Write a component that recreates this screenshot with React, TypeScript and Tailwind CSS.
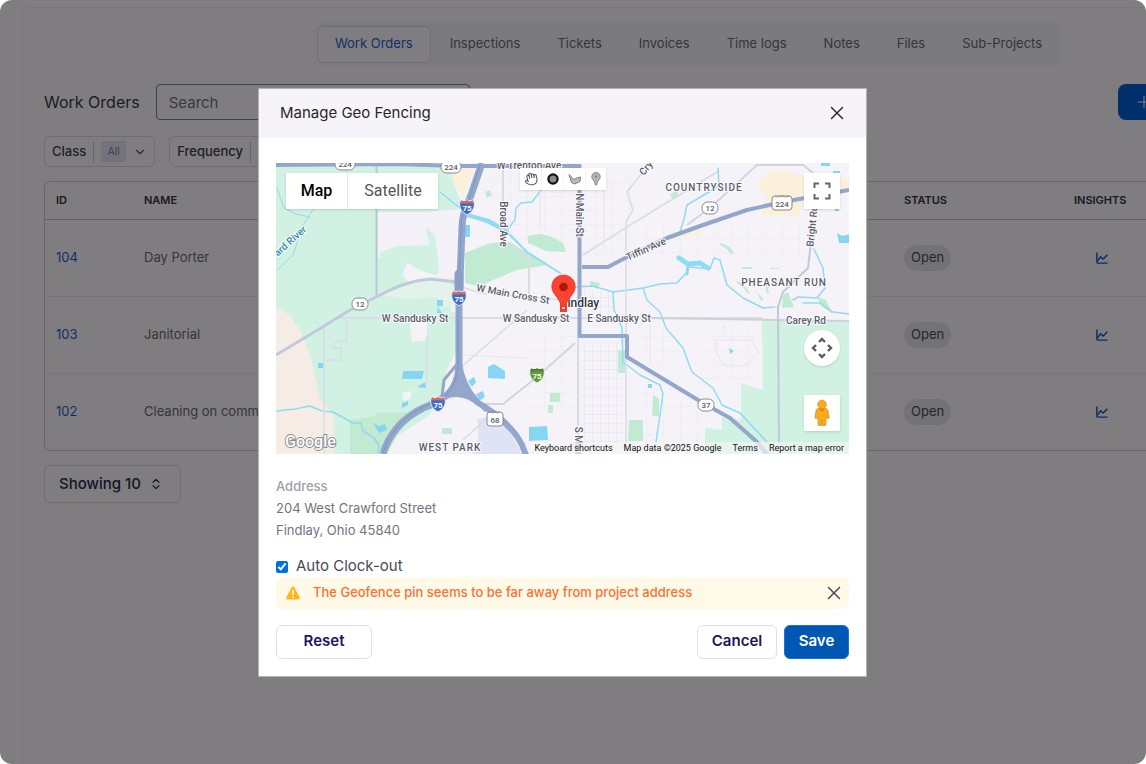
import { useState } from "react";
import { ChevronDown, ChevronsUpDown, Hand, Plus, X } from "lucide-react";

type Order = {
  id: number;
  name: string;
  status: string;
};

const TABS = [
  "Work Orders",
  "Inspections",
  "Tickets",
  "Invoices",
  "Time logs",
  "Notes",
  "Files",
  "Sub-Projects",
];

const FILTERS = ["Class", "Frequency"];

const ORDERS: Order[] = [
  { id: 104, name: "Day Porter", status: "Open" },
  { id: 103, name: "Janitorial", status: "Open" },
  { id: 102, name: "Cleaning on common areas", status: "Open" },
];

function TrendIcon() {
  return (
    <svg viewBox="0 0 12 12" className="size-3" fill="none" stroke="currentColor" strokeWidth="1.4">
      <path d="M.9.4V10a1.1 1.1 0 0 0 1.1 1.1h9.6" />
      <path d="M1.4 9.2 4.6 4.9l2.5 2.2 4.3-4.3" />
    </svg>
  );
}

function WarningIcon() {
  return (
    <svg viewBox="0 0 16 16" className="size-4 shrink-0">
      <path
        d="M6.7 2.2a1.5 1.5 0 0 1 2.6 0l5.4 10.1a1.4 1.4 0 0 1-1.3 2.1H2.6a1.4 1.4 0 0 1-1.3-2.1z"
        fill="#ffb81c"
      />
      <path d="M8 5.6v4" stroke="#fff8e6" strokeWidth="1.5" strokeLinecap="round" />
      <circle cx="8" cy="12" r=".9" fill="#fff8e6" />
    </svg>
  );
}

function Filter({ label }: { label: string }) {
  const id = `filter-${label.toLowerCase()}`;
  return (
    <div className="flex h-[31px] items-center rounded-md border border-[#dcdae4] px-[7px]">
      <label htmlFor={id} className="text-[13px] font-medium text-[#40404c]">
        {label}
      </label>
      <span className="mx-[7px] h-5 w-px bg-[#ccccd6]" />
      <select
        id={id}
        className="h-[21px] w-[25px] appearance-none rounded-xs bg-[#e8e6f6] text-center text-[10px] text-[#7c7c90]"
      >
        <option>All</option>
      </select>
      <ChevronDown className="ml-[7px] size-3.5 text-[#50505c]" />
    </div>
  );
}

function OrdersTable() {
  return (
    <div className="overflow-hidden rounded-md border border-[#cfccd4]">
      <table className="w-full table-fixed text-left text-[13px]">
        <thead className="text-[11px] text-[#34343e]">
          <tr className="h-[37px] border-b border-[#c8c5cc]">
            <th className="w-[99px] pl-[11px] font-semibold">ID</th>
            <th className="font-semibold">NAME</th>
            <th className="w-[170px] font-semibold">STATUS</th>
            <th className="w-[258px] font-semibold">INSIGHTS</th>
          </tr>
        </thead>
        <tbody>
          {ORDERS.map((o) => (
            <tr key={o.id} className="h-[77px] border-b border-[#eeeaf0] last:border-0">
              <td className="pl-[11px]">
                <a href={`#${o.id}`} className="text-[#1e62d0]">
                  {o.id}
                </a>
              </td>
              <td className="text-[#6c6c76]">{o.name}</td>
              <td>
                <span className="inline-flex h-[26px] items-center rounded-full bg-[#e6e4ee] px-[7px] text-[#4c4c56]">
                  {o.status}
                </span>
              </td>
              <td className="pl-[22px]">
                <button aria-label={`Insights ${o.id}`} className="flex text-[#0a58c8]">
                  <TrendIcon />
                </button>
              </td>
            </tr>
          ))}
        </tbody>
      </table>
    </div>
  );
}

function Label({
  x,
  y,
  size = 10,
  rotate = 0,
  weight = 500,
  fill = "#5a5e66",
  spacing,
  children,
}: {
  x: number;
  y: number;
  size?: number;
  rotate?: number;
  weight?: number;
  fill?: string;
  spacing?: number;
  children: string;
}) {
  return (
    <text
      x={x}
      y={y}
      fontSize={size}
      fontWeight={weight}
      fill={fill}
      stroke="#fbfaff"
      strokeWidth="2"
      paintOrder="stroke"
      textAnchor="middle"
      dominantBaseline="central"
      letterSpacing={spacing}
      transform={`rotate(${rotate} ${x} ${y})`}
    >
      {children}
    </text>
  );
}

function Shield({ x, y, us = false, children }: { x: number; y: number; us?: boolean; children: string }) {
  const w = children.length * 4 + 8;
  const h = us ? 14 : 12;
  return (
    <g>
      <rect x={x - w / 2} y={y - h / 2} width={w} height={h} rx={us ? 3 : 5.5} fill="#fff" stroke="#85888e" />
      {us && <path d={`M${x - w / 2 + 3} ${y - 7}q${w / 4 - 1.5} 2 ${w / 2 - 3} 0q${w / 4 - 1.5} 2 ${w / 2 - 3} 0`} fill="#f5f3f8" stroke="#85888e" />}
      <text x={x} y={y + (us ? 1 : 0)} fontSize="8" fontWeight="500" fill="#5a5e66" textAnchor="middle" dominantBaseline="central">
        {children}
      </text>
    </g>
  );
}

function Interstate({ x, y, green = false }: { x: number; y: number; green?: boolean }) {
  const body = green ? "#5f9a3c" : "#3f6fc4";
  return (
    <g transform={`translate(${x} ${y})`}>
      <path
        d="M-6-7q3 1.4 6 0 3 1.4 6 0 2.4 4 .8 8Q5.400 5.500 0 8-5.400 5.500-6.800 1q-1.600-4 .8-8z"
        fill={body}
        stroke="#fff"
        strokeWidth=".8"
      />
      <path d="M-6-6.600q3 1.400 6 0 3 1.400 6 0l1 2.800H-7z" fill={green ? "#4c8430" : "#e5665e"} />
      <text y="1.300" fontSize="8" fontWeight="700" fill="#fff" textAnchor="middle" dominantBaseline="central">
        75
      </text>
    </g>
  );
}

function MapArt() {
  return (
    <svg
      viewBox="276 163 573 291"
      preserveAspectRatio="xMidYMid slice"
      className="size-full font-[Roboto,sans-serif]"
      fill="none"
    >
      <defs>
        <pattern id="blocks" width="8" height="9" patternUnits="userSpaceOnUse">
          <path d="M0 .5h8M.5 0v9" stroke="#e6e6ef" strokeWidth=".8" />
        </pattern>
        <pattern id="streets" width="17" height="14" patternUnits="userSpaceOnUse">
          <path d="M0 .5h17M.5 0v14" stroke="#ececf3" strokeWidth=".8" />
        </pattern>
      </defs>
      <path d="M276 163h573v291H276z" fill="#f5f3f8" />

      {/* residential streets */}
      <g>
        <path d="M470 170h110v70H510z" fill="url(#streets)" />
        <path d="M583 170h50v85h-50z" fill="url(#streets)" />
        <path d="M640 225h160v30l-70 5H650z" fill="url(#streets)" />
        <path d="M528 335h50v75h-50z" fill="url(#streets)" />
        <path d="M582 342h40v100h-40z" fill="url(#blocks)" />
        <path d="M583 290h30v26h-30z" fill="url(#blocks)" />
        <path d="M640 325h35v40h-35z" fill="url(#streets)" />
        <path d="M700 325h55v55h-55z" fill="url(#streets)" />
        <path d="M383 222h40v20h-40z" fill="url(#blocks)" />
        <path d="M635 385h20v60h-20zM660 400h40v48h-40z" fill="url(#streets)" />
      </g>

      {/* parks and farmland */}
      <g fill="#d1f1e2">
        <path d="M276 163h174l4 22 10 24-40 3h-46v46l20-11 32-2-5-17 9 10 4 30-4 7-29-13-3 13 10 10 38 12 2 20-6 60-4 22-15 18-30 19-10 18H276z" />
        <path d="M762 320h87v134H705v-26l17 2v-12l19 2v-37l22 7z" />
        <path d="M440 312h16v40l-20 40h-8z" />
        <path d="M442 285l12-8v22h-12z" />
      </g>
      <path d="M378 212h80v66l-16 2-8-8 4-4-4-30-9-10 5 17-32 2-20 11z" fill="#f4f2f8" />
      <path d="M378 295l26-13 30-5 22 2v28h-12l-8-10-30 2z" fill="#e3f2ea" />
      <path d="m380 252 18-6 32-1-4-18 9 9 4 32-2 7-16-4-14-9-5 14 8 8-30 12z" fill="#d1f1e2" />
      <path d="M409 320h18v20l-15 2zM402 393l10-2-2 8-6 2z" fill="#f5f3f8" />
      <path d="m376 413 44-1-17 14-17 28h-36v-34l26-4z" fill="#c1ead1" />
      <path d="M276 307l14 8 10 15 10 25 10 43 14 17v39h-58z" fill="#f6ece6" />
      <g fill="#c1ead2">
        <path d="m465 253 25-10 20-1 37 23-30 5-24 10-13 7-15-4z" />
        <path d="m528 236 12-2 10 2 13 7 3 9-20-1-18-8z" />
        <path d="M485 192l5-2 2 5-5 3zM550 393h10v9h-10zM548 405h5v8h-5zM629 420h14v21h-15zM618 350h7v23h-7zM653 395l6 4v18l-7-2zM442 428h10v6h-10zM670 195l7-5 1 6-5 4z" />
        <path d="m782 308 1-13 5-3 6 15zM817 297l9 3 7 14-12-8z" />
        <path d="M720 243q10 2 14 10l-3 1q-4-6-11-9zM742 267h10v2h-10zM770 268h9v1h-9zM737 281q9 4 13 13l-3-1q-3-6-10-10zM766 280l3 14-3-2zM756 291l8 9-3 1zM590 281l10 2-2 6-8-3z" />
      </g>
      <g fill="#fbf0da">
        <path d="M450 170l26-5-12 30-9-8z" />
        <path d="M757 185l10-12 23-2 15 8h44v12l-46 7-3 17h-40l7-17z" />
        <path d="M672 233l24-6 6 6-28 6z" />
      </g>
      <path d="M477 420q8-4 18-3l15 14 12 23h-50q9-15 5-34z" fill="#dfe3f5" />

      {/* water */}
      <g stroke="#8fdaf4" strokeLinecap="round" strokeLinejoin="round" strokeWidth="1.500">
        <path d="M277 188l7 20 12 6 14 3M277 270l16-15 10-30 10-15" strokeWidth="1" />
        <path d="m277 411 18-2 15-3 12 5 11 1 20 11h8l2 8 10 6 6 8-1 9" />
        <path d="m467 215 20 7 20 10 20 20 33 21" strokeWidth="2" />
        <path d="m467 215 22 6 18 11" strokeWidth="4" />
        <path d="m507 230 8-10 1-12 5-5 11-1 10-13M440 192l20 16" />
        <path d="m575 287 18-1 20 6 30-4 17-4 17-1 10-11" />
        <path d="m613 292 1 18 8 18 1 34 17 13 20 10 3 9-7 48M643 288l4 12 13 12 6 16 17 20 9 24 21 16 9 17 18 8 27 29" />
        <path d="M677 257l13 10 20 2 4-11 6 2 7 25 16 13 20 10 12-1M793 300l5-3 19 1 8-10-2-20-9-19M718 168l1 18-32 19-3 14-4 13M803 303h17l13 9 16 2" />
        <path d="m679 258 9 6 12-1 8 5" strokeWidth="5" />
        <path d="m688 266-1 8" strokeWidth="3" />
      </g>
      <g fill="#86d6f3">
        <path d="M403 371h21l-2 8h-20zM417 387l8-5 1 6zM402 403l6-2v4l-6 3zM373 423l6 3 6-2 2 6-8 3zM318 363h5v5h-5z" />
        <path d="M488 367l6-3 11 7v8l-17-1zM468 381l6-4 2 5-4 5zM476 394l7-3 2 6-6 4zM529 427l18-1 1 14-19 1zM464 225h6v12h-6zM437 300h6v6h-6z" />
        <path d="M837 233l5 3 8-2v9h-11zM806 182h5v-3h-5zM821 163h9v3h-9zM833 171h7v3h-7zM835 208h4v3h-4zM729 348l5 3-4 3zM648 384h4v4h-4zM438 307l4 6h-5z" />
      </g>

      {/* secondary roads */}
      <g stroke="#d9dce6" strokeWidth="1.500">
        <path d="M376.500 163v132" stroke="#b8c9cd" strokeWidth="2" />
        <path d="M324 328v126M347 320v20l-11 2-2 8M330 348h11v12h-17M427 335v50" />
        <path d="M337 318h120M460 318h189" strokeWidth="2" />
        <path d="M503 170v70l26 18v37M578 336v118M650 318h112" strokeWidth="2" />
        <path d="m450 283 30 10 70 6 28 2M460 368l67-58M463 440l24-22" />
        <path d="M646 168l-19 24 6 18-7 12v232M583 255l44-28 90-55" />
        <path d="M649 318l200 3" stroke="#ccd1de" strokeWidth="2" />
        <path d="M811 243l-3 25-25 24-5 15 1 147" stroke="#c1c8d6" strokeWidth="2" />
        <path d="M687 225l23-17 47-43h46l10 8M485 404h18l34-27 38-34" stroke="#cfd6e1" strokeWidth="2" />
        <path d="M540 170v60M604 170v80M650 325v40M716 340h35l8 12-14 14h-20l-8-12zM724 334v-9M460 355l70 3" stroke="#e5e5ee" strokeWidth="1" />
      </g>
      <path d="m276 355 40-24 34-21 30-15q25-14 50-16l27 3" stroke="#c3c9dc" strokeWidth="3" />

      {/* highways */}
      <g stroke="#93a6cb" strokeLinejoin="round">
        <path d="M276 165l120-1 60 2h125" strokeWidth="4" />
        <path d="M579.500 165v171H627v21l33 20 43 26 27 15 27 24 10 12" strokeWidth="4" />
        <path d="M582 267h26l19-10 40-19 36-13 44-15 36-8 66-12" strokeWidth="4" />
        <path d="M482 163l-12 35q-8 15-8 30l-3 77v57q0 22-12 33-10 8-24 13-16 8-26 20-10 12-14 26" strokeWidth="7" />
        <path d="M459 362q2 22 18 40 10 6 18 12 20 16 27 31l4 10" strokeWidth="6" />
        <path d="M458 363l-14 17-2 16M443 397l17-5 22 13M434 404q24-18 46 2M450 392l16-1 20 20" strokeWidth="3" />
      </g>
      <path d="M458 375l18 25-14-5-14 1z" fill="#93a6cb" />
      <path d="M480 165l-11 34q-8 15-8 30l-3 76v57q0 22-11 32-10 8-24 13-16 8-26 20-10 12-14 26" stroke="#7f95bf" strokeWidth="1" />
      <path d="M459 274v18" stroke="#8a9fc6" strokeWidth="9" strokeLinecap="round" />

      <Interstate x={467} y={207} />
      <Interstate x={459} y={298} />
      <Interstate x={438} y={404} />
      <Interstate x={537} y={375} green />
      <Shield x={345} y={164}>224</Shield>
      <Shield x={451} y={167}>224</Shield>
      <Shield x={782} y={203} us>224</Shield>
      <Shield x={360} y={304}>12</Shield>
      <Shield x={710} y={208}>12</Shield>
      <Shield x={706} y={405}>37</Shield>
      <Shield x={495} y={419} us>68</Shield>

      <Label x={529} y={165}>W Trenton Ave</Label>
      <Label x={503} y={224} rotate={90}>Broad Ave</Label>
      <Label x={579} y={215} rotate={90}>N Main St</Label>
      <Label x={578} y={448} rotate={90}>S Main St</Label>
      <Label x={646} y={168} rotate={-50}>Cry</Label>
      <Label x={646} y={249} rotate={-24}>Tiffin Ave</Label>
      <Label x={812} y={226} rotate={-84}>Bright Rd</Label>
      <Label x={513} y={294} rotate={10}>W Main Cross St</Label>
      <Label x={415} y={318}>W Sandusky St</Label>
      <Label x={536} y={318}>W Sandusky St</Label>
      <Label x={619} y={318}>E Sandusky St</Label>
      <Label x={806} y={320}>Carey Rd</Label>
      <Label x={290} y={241} rotate={-42} fill="#2f8fa3">ard River</Label>
      <Label x={704} y={187} spacing={1}>COUNTRYSIDE</Label>
      <Label x={784} y={282} spacing={1}>PHEASANT RUN</Label>
      <Label x={450} y={447} spacing={1}>WEST PARK</Label>
      <Label x={580} y={303} size={12} fill="#33363c">Findlay</Label>

      {/* site pin */}
      <path d="M560 300h7v12h-7z" fill="#fb3a26" />
      <path d="M562 307h3v2h-3z" fill="#ffc9c2" />
      <path
        d="M563.500 275c-6.600 0-11.700 5-11.700 11.500 0 7.800 7.200 10.400 9.500 19.500h4.400c2.300-9.100 9.500-11.700 9.500-19.500 0-6.500-5.100-11.500-11.700-11.500z"
        fill="#fa4431"
        stroke="#d23a2c"
        strokeWidth=".7"
      />
      <circle cx="563.500" cy="287" r="4.300" fill="#b1160c" />

      <text x="285" y="447" fontSize="16" fontWeight="500" fill="#fff" stroke="#85898a" strokeWidth="1.800" paintOrder="stroke">
        Google
      </text>
    </svg>
  );
}

function DrawingTools() {
  return (
    <div className="absolute top-[5px] left-[244px] flex h-[22px] bg-white shadow-sm">
      <button aria-label="Stop drawing" className="flex w-[21px] items-center justify-center">
        <Hand className="size-3.5 -rotate-12 text-[#555]" strokeWidth={1.75} />
      </button>
      <button aria-label="Draw a circle" className="flex w-[22px] items-center justify-center border-l border-gray-100">
        <svg viewBox="0 0 16 16" className="size-4">
          <circle cx="8" cy="8" r="4.600" fill="#8a8a8a" stroke="#111" strokeWidth="2.200" />
        </svg>
      </button>
      <button aria-label="Draw a shape" className="flex w-[22px] items-center justify-center border-l border-gray-100">
        <svg viewBox="0 0 16 16" className="size-4" fill="#b9b9b9" stroke="#808080">
          <path d="M2 3.500 6.500 8q1.500.6 3-1L13.500 6l-.5 4.500-5.500 2.500-3-1.500z" strokeLinejoin="round" />
        </svg>
      </button>
      <button aria-label="Add a marker" className="flex w-[21px] items-center justify-center border-l border-gray-100">
        <svg viewBox="0 0 16 16" className="size-4" fill="#b5b5b5" stroke="#888">
          <path d="M8 1.500a4.200 4.200 0 0 0-4.200 4.200C3.800 8.500 7 9.500 7.300 14h1.400c.3-4.500 3.500-5.500 3.500-8.300A4.200 4.200 0 0 0 8 1.500z" />
          <circle cx="8" cy="5.600" r="1" fill="#777" stroke="none" />
        </svg>
      </button>
    </div>
  );
}

function GeoMap() {
  return (
    <div className="relative h-[291px] overflow-hidden font-[Roboto,sans-serif]">
      <MapArt />
      <div className="absolute top-2.5 left-2.5 flex h-9 bg-white text-base shadow-sm">
        <button className="w-[62px] border-r border-gray-200 font-medium text-black">Map</button>
        <button className="w-[90px] text-[#565656]">Satellite</button>
      </div>
      <DrawingTools />
      <button
        aria-label="Toggle fullscreen view"
        className="absolute top-2.5 right-[9px] flex size-9 items-center justify-center bg-white shadow-sm"
      >
        <svg viewBox="0 0 18 18" className="size-[18px]" fill="none" stroke="#666" strokeWidth="2">
          <path d="M1.500 6V1.500H6M12 1.500h4.500V6M16.500 12v4.500H12M6 16.500H1.500V12" />
        </svg>
      </button>
      <button
        aria-label="Map camera controls"
        className="absolute top-[167px] right-[9px] flex size-9 items-center justify-center rounded-full bg-white shadow-sm"
      >
        <svg viewBox="0 0 22 22" className="size-[22px]" fill="none" stroke="#5c5c5c" strokeWidth="2.400">
          <path d="m8 5 3-3 3 3M8 17l3 3 3-3M5 8l-3 3 3 3M17 8l3 3-3 3" />
        </svg>
      </button>
      <button
        aria-label="Street view"
        className="absolute top-[232px] right-[9px] flex size-9 items-center justify-center bg-white shadow-sm"
      >
        <svg viewBox="0 0 18 28" className="h-7 w-[18px]" fill="#fbab18" stroke="#c98b2b" strokeWidth=".7">
          <path d="M5 9.500h8q1.700.4 2 2.500l1.200 6.500q-.5 1.600-2 .8l-1-1-.4 8.200H9.600L9 20.500l-.6 6H5.200l-.4-8.200-1 1q-1.500.8-2-.8L3 12q.3-2.100 2-2.500z" />
          <path d="M6 9.800h6l-3 3.500z" fill="#f07c2a" stroke="none" />
          <circle cx="9" cy="5.500" r="4.300" />
        </svg>
      </button>
      <div className="absolute right-0 bottom-0 flex h-3 items-center gap-[11px] bg-[#f5f5f5]/70 pr-[5px] pl-1 text-[9px] leading-3 text-[#111]">
        <button>Keyboard shortcuts</button>
        <span>Map data ©2025 Google</span>
        <a href="#terms">Terms</a>
        <a href="#report">Report a map error</a>
      </div>
    </div>
  );
}

function GeoFencingDialog() {
  const [autoClockOut, setAutoClockOut] = useState(true);

  return (
    <div
      role="dialog"
      aria-labelledby="geo-title"
      className="w-[609px] max-w-full border border-[#b4b2b6] bg-white"
    >
      <header className="flex h-[49px] items-center justify-between bg-[#f6f4f8] pr-[18px] pl-[21px]">
        <h2 id="geo-title" className="text-[15px] text-[#26262e]">
          Manage Geo Fencing
        </h2>
        <button aria-label="Close" className="text-[#26262e]">
          <X className="size-[22px]" strokeWidth={1.5} />
        </button>
      </header>

      <div className="px-[17px] pt-[25px] pb-[17px]">
        <GeoMap />

        <div className="mt-[21px] text-[13px] leading-[22px] text-[#74747e]">
          <p className="font-medium text-[#a0a0a6]">Address</p>
          <p>204 West Crawford Street</p>
          <p>Findlay, Ohio 45840</p>
        </div>

        <div className="mt-4 flex h-5 items-center gap-2">
          <input
            id="auto-clock-out"
            type="checkbox"
            checked={autoClockOut}
            onChange={(e) => setAutoClockOut(e.target.checked)}
            className="size-3 accent-[#0072d9]"
          />
          <label htmlFor="auto-clock-out" className="text-[15px] text-[#4a4a54]">
            Auto Clock-out
          </label>
        </div>

        <div className="flex h-8 items-center rounded-md bg-[#fff9e8] pr-1 pl-[9px]">
          <WarningIcon />
          <p className="ml-3 flex-1 text-[13px] font-medium text-[#fb7232]">
            The Geofence pin seems to be far away from project address
          </p>
          <button aria-label="Dismiss warning" className="text-[#45424e]">
            <X className="size-[22px]" strokeWidth={1.5} />
          </button>
        </div>

        <div className="mt-4 flex gap-[7px] text-[15px] font-semibold text-[#1c1464]">
          <button className="mr-auto h-[34px] w-24 rounded-md border border-[#e2def2]">Reset</button>
          <button className="h-[34px] w-20 rounded-md border border-[#e2def2]">Cancel</button>
          <button className="h-[34px] w-[65px] rounded-md border border-[#1672e0] bg-[#0056b3] text-white">
            Save
          </button>
        </div>
      </div>
    </div>
  );
}

export default function App() {
  return (
    <div className="relative flex min-h-screen overflow-hidden rounded-xl bg-[#fffaff] font-[Inter,sans-serif]">
      <div className="w-[22px] shrink-0" />
      {/* the board is wider than the window and runs off its right edge */}
      <main className="mt-[7px] -mr-[208px] min-w-0 flex-1 rounded-tl-lg border-t border-l border-[#f2eef2] px-[21px] pt-[14px]">
        <nav className="mx-auto flex h-11 w-fit items-center gap-px rounded-lg bg-[#f7f5fc]">
          {TABS.map((tab, i) => (
            <button
              key={tab}
              className={`h-[37px] rounded-md border px-[17px] text-[13px] ${
                i === 0
                  ? "border-[#dcdaea] bg-[#fffaff] text-[#1e62d0]"
                  : "border-transparent text-[#6a6a74]"
              }`}
            >
              {tab}
            </button>
          ))}
        </nav>

        <div className="mt-[18px] flex items-center">
          <h1 className="mr-4 text-base text-[#3a3a44]">Work Orders</h1>
          <input
            type="search"
            aria-label="Search work orders"
            placeholder="Search"
            className="h-9 w-[314px] rounded-sm border border-[#76829c] px-3 text-[15px] placeholder:text-[#707482]"
          />
          <button
            aria-label="Add work order"
            className="ml-auto flex h-9 w-[215px] items-center rounded-lg bg-[#005ed2] pl-4 text-white"
          >
            <Plus className="size-5" strokeWidth={1.25} />
          </button>
        </div>

        <div className="mt-4 mb-[14px] flex gap-[14px]">
          {FILTERS.map((f) => (
            <Filter key={f} label={f} />
          ))}
        </div>

        <OrdersTable />

        <div className="mt-[14px] flex h-[38px] w-fit items-center rounded-md border border-[#dcdae4] pr-[17px] pl-[14px] text-[#24304e]">
          <select aria-label="Rows per page" className="appearance-none text-[15px] font-medium">
            <option>Showing 10</option>
          </select>
          <ChevronsUpDown className="ml-2 size-3.5" />
        </div>
      </main>

      <div className="absolute inset-0 flex items-center justify-center bg-black/50 pr-[21px]">
        <GeoFencingDialog />
      </div>
    </div>
  );
}
